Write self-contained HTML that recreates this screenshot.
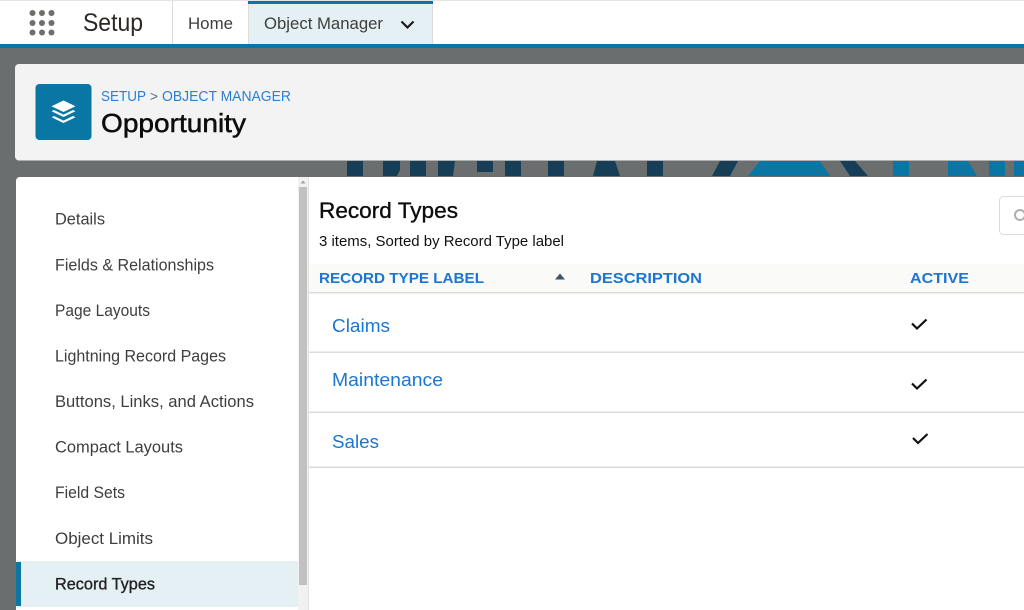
<!DOCTYPE html>
<html lang="en">
<head>
<meta charset="utf-8">
<title>Setup - Object Manager</title>
<style>
html,body{margin:0;padding:0;width:1024px;height:610px;overflow:hidden;background:#6a6e6f}
svg{display:block;filter:blur(.35px)}
text{font-family:"Liberation Sans",sans-serif;white-space:pre}
</style>
</head>
<body>
<svg width="1024" height="610" viewBox="0 0 1024 610" xmlns="http://www.w3.org/2000/svg">
<rect width="1024" height="610" fill="#6a6e6f"/>

<!-- Top bar -->
<rect width="1024" height="44" fill="#fff"/>
<rect width="1024" height="1" fill="#e4e4e4"/>
<rect y="44" width="1024" height="4" fill="#0b76a3"/>
<g fill="#706e6b">
<circle cx="32.5" cy="13" r="3"/><circle cx="42" cy="13" r="3"/><circle cx="51.5" cy="13" r="3"/>
<circle cx="32.5" cy="23" r="3"/><circle cx="42" cy="23" r="3"/><circle cx="51.5" cy="23" r="3"/>
<circle cx="32.5" cy="32.5" r="3"/><circle cx="42" cy="32.5" r="3"/><circle cx="51.5" cy="32.5" r="3"/>
</g>
<text x="83" y="31" font-size="25" fill="#2b2826" textLength="60" lengthAdjust="spacingAndGlyphs">Setup</text>
<rect x="172" y="1" width="1" height="43" fill="#dddbda"/>
<text x="188" y="29" font-size="16.500" fill="#3e3e3c" textLength="45" lengthAdjust="spacingAndGlyphs">Home</text>
<rect x="248" y="1" width="185" height="43" fill="#e5f0f5"/>
<rect x="248" y="1" width="185" height="3" fill="#0b76a3"/>
<rect x="248" y="4" width="1" height="40" fill="#dddbda"/>
<rect x="432" y="4" width="1" height="40" fill="#dddbda"/>
<text x="264" y="29" font-size="16.500" fill="#3e3e3c" textLength="119" lengthAdjust="spacingAndGlyphs">Object Manager</text>
<path d="M401.5 21.5L407.5 27.5L413.5 21.5" fill="none" stroke="#1c1c1c" stroke-width="2.2"/>

<!-- Background artwork strip -->
<g fill="#163f57">
<rect x="347" y="161" width="16" height="15"/>
<path d="M383 161H400V170L397 176H383Z"/>
<rect x="410" y="161" width="16" height="15"/>
<path d="M438 161H455L453 176H438Z"/>
<rect x="477" y="161" width="16" height="11"/>
<rect x="505" y="161" width="16" height="15"/>
<rect x="548" y="161" width="16" height="15"/>
<path d="M597 161H615L620 176H593Z"/>
<rect x="647" y="161" width="16" height="15"/>
<path d="M720 161H738L730 176H712Z"/>
<path d="M840 161H855L868 176H850Z"/>
</g>
<g fill="#0b76a3">
<path d="M760 161H820L830 176H748Z"/>
<rect x="893" y="161" width="16" height="15"/>
<path d="M948 161H968L977 176H948Z"/>
<rect x="989" y="161" width="16" height="15"/>
<rect x="1014" y="161" width="10" height="15"/>
</g>

<!-- Header card -->
<rect x="15" y="64" width="1020" height="96.500" rx="4" fill="#f3f3f3"/>
<rect x="35.5" y="84" width="56" height="56" rx="4" fill="#0a76a4"/>
<g fill="#fff">
<path d="M63.5 100.500L75.500 106.200L63.500 112L51.500 106.200Z"/>
<path d="M51.500 111.200L54 110L63.500 114.600L73 110L75.500 111.200L63.500 117Z"/>
<path d="M51.500 117.200L54 116L63.500 120.600L73 116L75.500 117.200L63.500 123Z"/>
</g>
<text x="101" y="101" font-size="15" fill="#2a7fd6" textLength="45" lengthAdjust="spacingAndGlyphs">SETUP</text>
<text x="150" y="101" font-size="14" fill="#54698d" textLength="8" lengthAdjust="spacingAndGlyphs">&gt;</text>
<text x="162" y="101" font-size="15" fill="#2a7fd6" textLength="129" lengthAdjust="spacingAndGlyphs">OBJECT MANAGER</text>
<text x="101" y="132" font-size="26" fill="#0d0d0d" stroke="#0d0d0d" stroke-width=".5" textLength="145" lengthAdjust="spacingAndGlyphs">Opportunity</text>

<!-- Sidebar -->
<path d="M16 181a4 4 0 0 1 4-4H298V610H16Z" fill="#fff"/>
<rect x="298" y="177" width="11" height="433" fill="#f1f1f1"/>
<rect x="299" y="187" width="8" height="398" fill="#c1c1c1"/>
<path d="M303 180.500L305.500 183.500H300.500Z" fill="#a3a3a3"/>
<rect x="308" y="177" width="1" height="433" fill="#e2e2e2"/>
<g font-size="16.500" fill="#3e3e3c">
<text x="55" y="224.500" textLength="50" lengthAdjust="spacingAndGlyphs">Details</text>
<text x="55" y="270.500" textLength="159" lengthAdjust="spacingAndGlyphs">Fields &amp; Relationships</text>
<text x="55" y="316" textLength="95" lengthAdjust="spacingAndGlyphs">Page Layouts</text>
<text x="55" y="361.500" textLength="171" lengthAdjust="spacingAndGlyphs">Lightning Record Pages</text>
<text x="55" y="407" textLength="199" lengthAdjust="spacingAndGlyphs">Buttons, Links, and Actions</text>
<text x="55" y="452.500" textLength="128" lengthAdjust="spacingAndGlyphs">Compact Layouts</text>
<text x="55" y="498" textLength="70" lengthAdjust="spacingAndGlyphs">Field Sets</text>
<text x="55" y="544" textLength="98" lengthAdjust="spacingAndGlyphs">Object Limits</text>
</g>
<rect x="16" y="561" width="282" height="46" fill="#e5f0f5"/>
<rect x="16" y="562" width="5" height="44" fill="#0b76a3"/>
<text x="55" y="589.500" font-size="16.500" fill="#222" stroke="#222" stroke-width=".35" textLength="100" lengthAdjust="spacingAndGlyphs">Record Types</text>

<!-- Main -->
<rect x="309" y="177" width="715" height="433" fill="#fff"/>
<text x="319" y="218" font-size="22" fill="#0d0d0d" stroke="#0d0d0d" stroke-width=".35" textLength="139" lengthAdjust="spacingAndGlyphs">Record Types</text>
<text x="319" y="246" font-size="14.500" fill="#111" textLength="245" lengthAdjust="spacingAndGlyphs">3 items, Sorted by Record Type label</text>
<rect x="999.500" y="196.500" width="40" height="38" rx="4" fill="#fff" stroke="#dddbda"/>
<circle cx="1020" cy="215" r="5" fill="none" stroke="#b0adab" stroke-width="2"/>

<rect x="309" y="264" width="715" height="28" fill="#fafaf9"/>
<rect x="309" y="292" width="715" height="1.500" fill="#dddbda"/>
<g font-size="15" font-weight="bold" fill="#1b76d1">
<text x="319" y="283" textLength="165" lengthAdjust="spacingAndGlyphs">RECORD TYPE LABEL</text>
<text x="590" y="283" textLength="112" lengthAdjust="spacingAndGlyphs">DESCRIPTION</text>
<text x="910" y="283" textLength="59" lengthAdjust="spacingAndGlyphs">ACTIVE</text>
</g>
<path d="M560 273.500L565 279.500H555Z" fill="#3f5566"/>

<g font-size="18.500" fill="#1b76d1">
<text x="332" y="332" textLength="58" lengthAdjust="spacingAndGlyphs">Claims</text>
<text x="332" y="386" textLength="111" lengthAdjust="spacingAndGlyphs">Maintenance</text>
<text x="332" y="448" textLength="47" lengthAdjust="spacingAndGlyphs">Sales</text>
</g>
<rect x="309" y="351.500" width="715" height="1.500" fill="#dddbda"/>
<rect x="309" y="411.500" width="715" height="1.500" fill="#dddbda"/>
<rect x="309" y="466.500" width="715" height="1.500" fill="#dddbda"/>
<g fill="none" stroke="#111" stroke-width="2.200">
<path d="M912 323.500L917 328.500L926.500 319.500"/>
<path d="M912 383.500L917 388.500L926.500 379.500"/>
<path d="M913 438L918 443L927.500 434"/>
</g>
</svg>
</body>
</html>
